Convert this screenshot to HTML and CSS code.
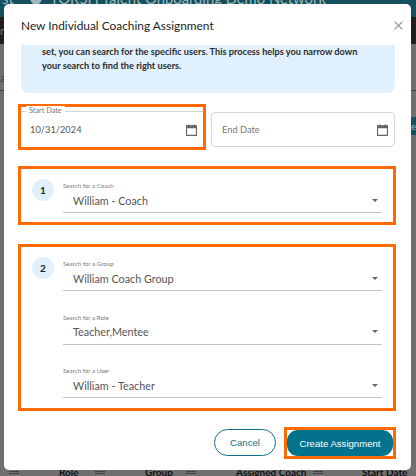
FILE: index.html
```html
<!DOCTYPE html>
<html lang="en">
<head>
    <meta charset="UTF-8">
    <meta name="viewport" content="width=device-width, initial-scale=1.0">
    <title>New Individual Coaching Assignment</title>
    <link rel="stylesheet" href="styles.css">
</head>
<body>
    <!-- page behind the dialog -->
    <div class="backdrop">
        <div class="top-bar">
            <span class="top-link">st</span>
            <svg class="brand-icon" width="12" height="16" viewBox="0 0 12 16">
                <path d="M0 0H12V7C12 11 9 13 6 15C3 13 0 11 0 7Z" fill="#9fb6bc"/>
            </svg>
            <span class="brand">TORSH Talent Onboarding Demo Network</span>
        </div>
        <div class="nav-bar"><span class="nav-text">n</span></div>
        <div class="tab-row"><span class="tab-text">al</span></div>
        <div class="side-button"><span>e</span></div>
        <div class="table-head">
            <i class="col-grip grip-role"></i>
            <span class="col-role">Role</span>
            <i class="col-grip grip-group"></i>
            <span class="col-group">Group</span>
            <i class="col-grip grip-coach"></i>
            <span class="col-coach">Assigned Coach</span>
            <i class="col-grip grip-date"></i>
            <span class="col-date">Start Date</span>
        </div>
    </div>

    <div class="modal">
        <div class="modal-header">
            <h2>New Individual Coaching Assignment</h2>
            <svg class="close-icon" width="9" height="9" viewBox="0 0 12 12">
                <path d="M1 1L11 11M11 1L1 11" stroke="#9a9a9a" stroke-width="1.5" fill="none"/>
            </svg>
        </div>

        <div class="info-box">
            <p>set, you can search for the specific users. This process helps you narrow down your search to find the right users.</p>
        </div>

        <div class="date-row">
            <div class="highlight date-highlight">
                <div class="date-field date-filled">
                    <span class="date-label">Start Date</span>
                    <span class="date-value">10/31/2024</span>
                    <svg class="cal-icon" width="11" height="12" viewBox="0 0 12 13">
                        <path d="M3 0.5V2.5M9 0.5V2.5" stroke="#666" stroke-width="1.4" fill="none"/>
                        <path d="M0.6 2H11.4V12.4H0.6Z" stroke="#666" stroke-width="1.2" fill="none"/>
                        <path d="M0.6 1.6H11.4V4.6H0.6Z" fill="#666"/>
                    </svg>
                </div>
            </div>
            <div class="date-field date-empty">
                <span class="date-placeholder">End Date</span>
                <svg class="cal-icon" width="11" height="12" viewBox="0 0 12 13">
                    <path d="M3 0.5V2.5M9 0.5V2.5" stroke="#666" stroke-width="1.4" fill="none"/>
                    <path d="M0.6 2H11.4V12.4H0.6Z" stroke="#666" stroke-width="1.2" fill="none"/>
                    <path d="M0.6 1.6H11.4V4.6H0.6Z" fill="#666"/>
                </svg>
            </div>
        </div>

        <div class="highlight step step-one">
            <div class="step-number">1</div>
            <div class="step-fields">
                <div class="select-field">
                    <label>Search for a Coach</label>
                    <div class="select-value"><span>William - Coach</span><i class="caret"></i></div>
                </div>
            </div>
        </div>

        <div class="highlight step step-two">
            <div class="step-number">2</div>
            <div class="step-fields">
                <div class="select-field">
                    <label>Search for a Group</label>
                    <div class="select-value"><span>William Coach Group</span><i class="caret"></i></div>
                </div>
                <div class="select-field">
                    <label>Search for a Role</label>
                    <div class="select-value"><span>Teacher,Mentee</span><i class="caret"></i></div>
                </div>
                <div class="select-field">
                    <label>Search for a User</label>
                    <div class="select-value"><span>William - Teacher</span><i class="caret"></i></div>
                </div>
            </div>
        </div>

        <div class="modal-footer">
            <button class="btn-cancel">Cancel</button>
            <div class="highlight btn-highlight">
                <button class="btn-create">Create Assignment</button>
            </div>
        </div>
    </div>
</body>
</html>
```

FILE: styles.css
```css
* {
    box-sizing: border-box;
}

html, body {
    height: 100%;
}

body {
    margin: 0;
    position: relative;
    overflow: hidden;
    background: #6f6f6f;
    font-family: 'Lato', sans-serif;
    color: #333;
}

/* page behind the dialog */
.backdrop {
    height: 100%;
    display: flex;
    flex-direction: column;
}

.top-bar {
    position: relative;
    height: 17px;
    background: #14505e;
    overflow: hidden;
    color: #9fb6bc;
    font-size: 14.8px;
    line-height: 18px;
    white-space: nowrap;
}

.top-link {
    position: absolute;
    left: 2px;
    top: -11px;
}

.brand-icon {
    position: absolute;
    left: 30px;
    top: -9px;
}

.brand {
    position: absolute;
    left: 50px;
    top: -11px;
}

.nav-bar {
    height: 27px;
    background: #1e1e1e;
    color: #777;
    font-size: 11px;
    line-height: 27px;
}

.tab-row {
    height: 47px;
    border-bottom: 1px solid #14505e;
    padding-top: 27px;
    color: #14505e;
    font-size: 11px;
    line-height: 14px;
}

.side-button {
    position: absolute;
    right: 0;
    top: 117px;
    width: 5px;
    height: 18px;
    background: #14505e;
    color: #9fb6bc;
    font-size: 10px;
    line-height: 18px;
}

.table-head {
    position: relative;
    margin-top: auto;
    height: 7px;
    overflow: hidden;
    font-size: 10px;
    font-weight: bold;
    color: #111;
}

.table-head span {
    position: absolute;
    top: -2px;
    line-height: 10px;
}

.col-role { left: 59px; }
.col-group { left: 145px; }
.col-coach { left: 236px; }
.col-date { left: 362px; }

.col-grip {
    position: absolute;
    top: 2px;
    width: 10px;
    height: 3px;
    border-top: 1px solid #444;
    border-bottom: 1px solid #444;
}

.grip-role { left: 9px; }
.grip-group { left: 95px; }
.grip-coach { left: 186px; }
.grip-date { left: 313px; }

/* dialog */
.modal {
    position: absolute;
    left: 4px;
    top: 4px;
    width: 407px;
    height: 466px;
    background: #fff;
    border-radius: 5px;
    padding: 0 15px 0 14px;
}

.modal-header {
    height: 41px;
    padding: 13px 0 0 3px;
    display: flex;
    justify-content: space-between;
    align-items: flex-start;
}

.modal-header h2 {
    margin: 0;
    font-size: 11.9px;
    font-weight: 400;
    line-height: 18px;
    color: #222;
}

.close-icon {
    margin: 4px -7px 0 0;
}

.info-box {
    margin: 0 1px 0 3px;
    height: 48px;
    padding: 0 20px 0 21px;
    background: #e1f0fd;
    border-radius: 0 0 7px 7px;
}

.info-box p {
    margin: 0;
    font-size: 9.2px;
    font-weight: 700;
    line-height: 14px;
    color: #2b2b2b;
}

.highlight {
    border: 3px solid #ff6a00;
}

.date-row {
    margin-top: 11px;
    display: flex;
    align-items: flex-end;
    gap: 5px;
}

.date-highlight {
    width: 188px;
    height: 46px;
    padding-top: 4px;
}

.date-filled {
    height: 36px;
    border-top: 1px solid #d4d4d4;
    position: relative;
    padding-left: 9px;
}

.date-field {
    display: flex;
    align-items: center;
    justify-content: space-between;
    font-size: 9.3px;
}

.date-label {
    position: absolute;
    left: 5px;
    top: -6px;
    padding: 0 3px;
    background: #fff;
    font-size: 7.3px;
    line-height: 10px;
    color: #777;
}

.date-value {
    color: #555;
}

.date-filled .cal-icon {
    margin-right: 6px;
}

.date-empty {
    width: 184px;
    height: 35px;
    margin-bottom: 3px;
    padding: 0 6px 0 10px;
    border: 1px solid #d6d6d6;
    border-radius: 4px;
    color: #777;
}

.step {
    display: flex;
    margin: 16px 0 0;
    width: 378px;
}

.step-one {
    height: 59px;
}

.step-two {
    height: 167px;
    margin-top: 19px;
}

.step-number {
    flex: none;
    width: 22px;
    height: 22px;
    margin: 10px 0 0 11px;
    border-radius: 50%;
    background: #e1f0fd;
    font-size: 10px;
    font-weight: 700;
    line-height: 22px;
    text-align: center;
    color: #222;
}

.step-fields {
    flex: 1;
    margin: 0 11px 0 9px;
    display: flex;
    flex-direction: column;
    gap: 21.5px;
    padding-top: 12px;
}

.select-field {
    height: 32px;
    border-bottom: 1px solid #c4c4c4;
}

.select-field label {
    display: block;
    font-size: 6.2px;
    line-height: 9px;
    color: #777;
}

.select-value {
    height: 20px;
    padding: 0 4px 0 10px;
    display: flex;
    align-items: center;
    justify-content: space-between;
    font-size: 10.8px;
    color: #555;
}

.caret {
    width: 0;
    height: 0;
    border-left: 3.5px solid transparent;
    border-right: 3.5px solid transparent;
    border-top: 3.5px solid #666;
}

.modal-footer {
    margin-top: 16px;
    width: 378px;
    display: flex;
    justify-content: flex-end;
    align-items: center;
    gap: 8px;
}

.modal-footer button {
    font-family: 'Liberation Sans', sans-serif;
    font-size: 9.6px;
    padding: 0;
    cursor: pointer;
}

.btn-cancel {
    width: 62px;
    height: 27px;
    margin-bottom: 2px;
    background: #fff;
    border: 1px solid #0f7288;
    border-radius: 14px;
    color: #0f7288;
}

.btn-highlight {
    width: 112px;
    height: 32px;
}

.btn-create {
    display: block;
    width: 100%;
    height: 100%;
    background: #03728c;
    border: none;
    border-radius: 11px;
    color: #fff;
}
```
